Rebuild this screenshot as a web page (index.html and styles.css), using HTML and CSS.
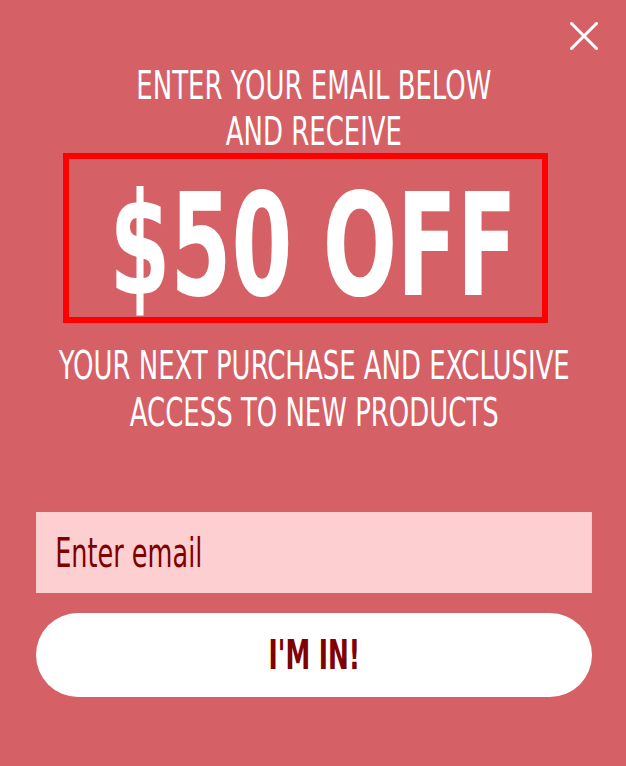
FILE: index.html
```html
<!DOCTYPE html>
<html lang="en">
<head>
    <meta charset="UTF-8">
    <meta name="viewport" content="width=device-width, initial-scale=1.0">
    <title>Get $50 Off</title>
    <link rel="stylesheet" href="styles.css">
</head>
<body>
    <div class="popup">
        <!-- close button -->
        <button class="close" type="button" aria-label="Close">
            <svg width="28" height="28" viewBox="0 0 28 28">
                <line x1="1.5" y1="1.5" x2="26.5" y2="26.5"/>
                <line x1="26.5" y1="1.5" x2="1.5" y2="26.5"/>
            </svg>
        </button>

        <h2 class="lead">
            <span class="squeeze">ENTER YOUR EMAIL BELOW<br>AND RECEIVE</span>
        </h2>

        <div class="offer">
            <span class="offer-text">$50 OFF</span>
        </div>

        <p class="lead sub">
            <span class="squeeze">YOUR NEXT PURCHASE AND EXCLUSIVE<br>ACCESS TO NEW PRODUCTS</span>
        </p>

        <!-- signup form -->
        <form class="signup" onsubmit="return false">
            <input class="email" type="email" placeholder="Enter email">
            <button class="submit" type="submit"><span>I'M IN!</span></button>
        </form>
    </div>
</body>
</html>
```

FILE: styles.css
```css
html, body {
    margin: 0;
    background: #d56066;
}
body {
    font-family: "DejaVu Sans Condensed", "Liberation Sans", sans-serif;
    color: #fff;
}
.popup {
    position: relative;
    width: 626px;
    height: 766px;
    box-sizing: border-box;
    padding: 63px 34px 0 36px;
    overflow: hidden;
}
.close {
    position: absolute;
    top: 22px;
    left: 570px;
    width: 28px;
    height: 28px;
    padding: 0;
    border: none;
    background: none;
    cursor: pointer;
}
.close svg {
    display: block;
}
.close line {
    stroke: #fff;
    stroke-width: 3;
    stroke-linecap: round;
}
.lead {
    display: flex;
    justify-content: center;
    margin: 0;
    font-size: 39px;
    font-weight: normal;
    line-height: 46px;
}
.squeeze {
    flex-shrink: 0;
    white-space: nowrap;
    text-align: center;
    transform: scaleX(0.74);
}
.offer {
    display: flex;
    justify-content: center;
    width: 485px;
    box-sizing: border-box;
    margin: -2px 0 0 27px;
    padding: 16px 0 0 16px;
    border: 6px solid #ff0000;
    font-size: 142px;
    font-weight: bold;
    line-height: 142px;
}
.offer-text {
    flex-shrink: 0;
    white-space: nowrap;
    transform: scaleX(0.685);
}
.sub {
    margin-top: 19px;
    line-height: 47px;
}
.signup {
    margin-top: 76px;
}
/* the field is drawn wide and squeezed so its text looks condensed */
.email {
    display: block;
    width: 783px;
    height: 81px;
    box-sizing: border-box;
    padding: 0 27px;
    border: none;
    background: #fecfd1;
    font-family: inherit;
    font-size: 40px;
    color: #800000;
    outline: none;
    transform: scaleX(0.71);
    transform-origin: left center;
}
.email::placeholder {
    color: #800000;
    opacity: 1;
}
.submit {
    display: block;
    width: 100%;
    height: 84px;
    margin-top: 20px;
    padding: 0;
    border: none;
    border-radius: 42px;
    background: #fff;
    font-family: inherit;
    font-size: 40px;
    font-weight: bold;
    color: #800000;
    cursor: pointer;
}
.submit span {
    display: inline-block;
    transform: scaleX(0.69);
}
```
